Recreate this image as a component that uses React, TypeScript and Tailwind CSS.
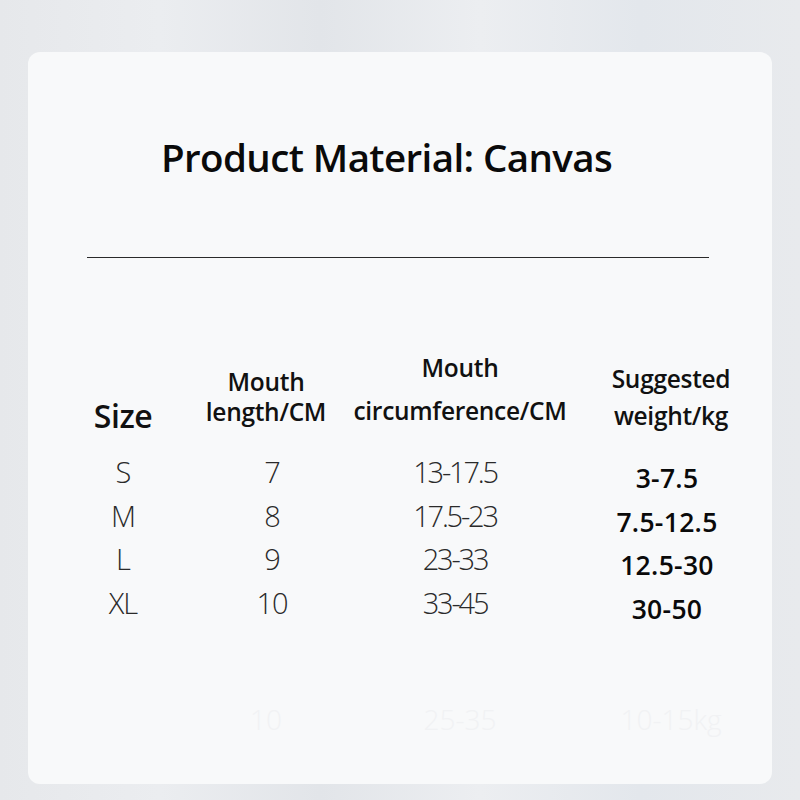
import React from "react";

const rows = [
  ["S", "7", "13-17.5", "3-7.5"],
  ["M", "8", "17.5-23", "7.5-12.5"],
  ["L", "9", "23-33", "12.5-30"],
  ["XL", "10", "33-45", "30-50"],
];

export default function App() {
  return (
    <div
      className="w-[800px] h-[800px] pt-[52px] px-[28px] bg-[linear-gradient(90deg,#e6e8eb_0%,#ebedf0_20%,#e2e5e9_40%,#eceef1_60%,#e3e7ec_80%,#e8eaed_100%)]"
      style={{ fontFamily: '"Open Sans", "Noto Sans", sans-serif' }}
    >
      <div className="h-[732px] rounded-[12px] bg-[#f8f9fa] flex flex-col">
        <div className="pt-[81px] pl-[133px] text-[38.5px] leading-[48px] font-semibold tracking-[-0.6px] text-[#0a0a0a]">
          Product Material: Canvas
        </div>
        <div className="mt-[76px] ml-[59px] mr-[63px] h-px bg-[#2a2a2a]" />
        <div className="mt-[88px] grid grid-cols-[120px_166px_222px_200px] pl-[35px] items-end text-[#111]">
          <div className="text-center text-[32px] leading-[36px] font-semibold tracking-[-0.5px]">Size</div>
          <div className="text-center text-[24.5px] leading-[30px] font-semibold tracking-[-0.3px] pb-[7px]">
            <div>Mouth</div>
            <div className="whitespace-nowrap">length/CM</div>
          </div>
          <div className="text-center text-[24.5px] leading-[43px] font-semibold tracking-[-0.3px] pb-[2px]">
            <div>Mouth</div>
            <div className="whitespace-nowrap">circumference/CM</div>
          </div>
          <div className="text-center text-[24.5px] leading-[37px] font-semibold tracking-[-0.3px] pb-[0px]">
            <div>Suggested</div>
            <div className="whitespace-nowrap">weight/kg</div>
          </div>
        </div>
        <div className="mt-[11px] flex flex-col pl-[35px]">
          {rows.map((r) => (
            <div key={r[0]} className="grid grid-cols-[120px_166px_222px_200px] h-[43.5px] items-center">
              <div className="text-center text-[29px] font-light tracking-[-1px] text-[#2a2a2a]">{r[0]}</div>
              <div className="text-center pl-[12px] text-[29px] font-light tracking-[-1px] text-[#2a2a2a]">{r[1]}</div>
              <div className="text-center pr-[10px] text-[29px] font-light tracking-[-2.2px] text-[#2a2a2a]">{r[2]}</div>
              <div className="text-center pr-[8px] pt-[14px] text-[26.5px] font-semibold tracking-[0.3px] text-[#0a0a0a]">{r[3]}</div>
            </div>
          ))}
        </div>
        <div className="mt-[79px] grid grid-cols-[120px_166px_222px_200px] pl-[35px] text-[28px] font-light text-[#f1f2f4]">
          <div />
          <div className="text-center">10</div>
          <div className="text-center">25-35</div>
          <div className="text-center">10-15kg</div>
        </div>
      </div>
    </div>
  );
}
